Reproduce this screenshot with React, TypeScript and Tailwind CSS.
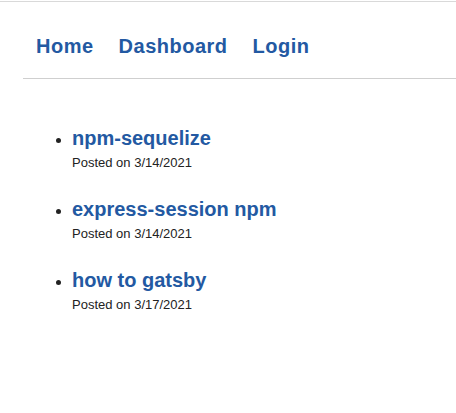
const posts = [
  { title: 'npm-sequelize', date: '3/14/2021' },
  { title: 'express-session npm', date: '3/14/2021' },
  { title: 'how to gatsby', date: '3/17/2021' },
]

export default function App() {
  return (
    <div className="min-h-[413px] bg-white font-['Liberation_Sans',Arial,sans-serif]">
      <div className="pt-px">
        <div className="border-t border-[#d9d9d9]" />
      </div>
      <nav className="ml-[23px] border-b border-[#cfcfcf] pl-[13px] pt-[33px] pb-[20px]">
        <ul className="flex gap-[25px] text-[20px] font-bold leading-[23px] tracking-[0.5px] text-[#2359a2]">
          <li><a href="#">Home</a></li>
          <li><a href="#">Dashboard</a></li>
          <li><a href="#">Login</a></li>
        </ul>
      </nav>
      <ul className="mt-[48px] list-disc pl-[72px] text-[#222]">
        {posts.map((p) => (
          <li key={p.title} className="mb-[28px]">
            <a href="#" className="block text-[20px] font-bold leading-[23px] text-[#2359a2]">
              {p.title}
            </a>
            <p className="mt-[5px] text-[13px] leading-[15px] text-[#222]">Posted on {p.date}</p>
          </li>
        ))}
      </ul>
    </div>
  )
}
